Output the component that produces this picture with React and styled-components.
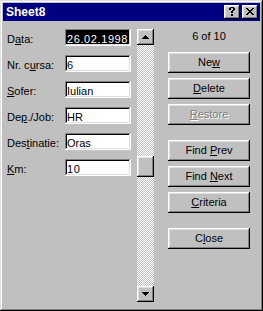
import React from "react";
import styled, { createGlobalStyle, css } from "styled-components";

const GlobalStyle = createGlobalStyle`
  html, body { margin: 0; padding: 0; background: #c0c0c0; }
  body { font-family: "Liberation Sans", Arial, sans-serif; font-size: 11px; }
  * { box-sizing: border-box; }
`;

const raised = css`
  background: #c0c0c0;
  box-shadow: inset -1px -1px #000, inset 1px 1px #fff, inset -2px -2px #808080, inset 2px 2px #dfdfdf;
`;

const Window = styled.div`
  width: 263px;
  height: 311px;
  padding: 3px;
  background: #c0c0c0;
  box-shadow: inset -1px -1px #000, inset 1px 1px #dfdfdf, inset -2px -2px #808080, inset 2px 2px #fff;
  display: flex;
  flex-direction: column;
  font-family: "Liberation Sans", Arial, sans-serif;
  font-size: 11px;
  color: #000;
`;

const TitleBar = styled.div`
  height: 18px;
  background: #000080;
  display: flex;
  align-items: center;
  padding: 0 2px 0 3px;
`;

const Title = styled.div`
  flex: 1;
  color: #fff;
  font-weight: bold;
  font-size: 12px;
  line-height: 18px;
`;

const CaptionButtons = styled.div`
  display: flex;
  gap: 2px;
`;

const CaptionButton = styled.div`
  ${raised};
  width: 16px;
  height: 14px;
  display: flex;
  align-items: center;
  justify-content: center;
  padding-bottom: 1px;
`;

const Body = styled.div`
  flex: 1;
  display: flex;
  align-items: flex-start;
  padding: 8px 0 0 4px;
`;

const Form = styled.div`
  width: 124px;
  display: flex;
  flex-direction: column;
  gap: 9px;
`;

const FieldRow = styled.div`
  display: flex;
  height: 17px;
`;

const Label = styled.div`
  width: 58px;
  padding-top: 2px;
  line-height: 16px;
  white-space: nowrap;
`;

const Field = styled.div`
  width: 66px;
  height: 17px;
  padding: 2px 2px 0 2px;
  line-height: 16px;
  overflow: hidden;
  white-space: nowrap;
  background: ${(p) => (p.$selected ? "#000" : "#fff")};
  color: ${(p) => (p.$selected ? "#fff" : "#000")};
  letter-spacing: ${(p) => (p.$numeric ? "0.6px" : "0")};
  box-shadow: inset -1px -1px #fff, inset 1px 1px #808080, inset -2px -2px #dfdfdf, inset 2px 2px #000;
`;

const Key = styled.u`
  text-decoration: underline;
`;

const ScrollBar = styled.div`
  margin-left: 6px;
  width: 17px;
  height: 273px;
  display: flex;
  flex-direction: column;
`;

const ScrollArrow = styled.div`
  ${raised};
  height: 16px;
  display: flex;
  align-items: center;
  justify-content: center;
`;

const Track = styled.div`
  flex: 1;
  position: relative;
  background: repeating-conic-gradient(#c0c0c0 0 25%, #fff 0 50%) 0 0 / 2px 2px;
`;

const Thumb = styled.div`
  ${raised};
  position: absolute;
  left: 0;
  right: 0;
  height: 21px;
`;

const Side = styled.div`
  margin-left: 14px;
  width: 82px;
  display: flex;
  flex-direction: column;
`;

const Counter = styled.div`
  height: 23px;
  line-height: 14px;
  text-align: center;
`;

const ButtonGroup = styled.div`
  display: flex;
  flex-direction: column;
  gap: 5px;
  margin-top: ${(p) => (p.$spaced ? "15px" : "0")};
`;

const Button = styled.button`
  ${raised};
  display: block;
  width: 82px;
  height: 21px;
  border: none;
  padding: 0;
  margin: 0;
  font: inherit;
  line-height: 21px;
  text-align: center;
  color: ${(p) => (p.disabled ? "#808080" : "#000")};
  text-shadow: ${(p) => (p.disabled ? "1px 1px 0 #fff" : "none")};
  outline: none;
`;

const Pixels = ({ w, h, d }) => (
  <svg width={w} height={h} viewBox={`0 0 ${w} ${h}`} shapeRendering="crispEdges">
    <path d={d} fill="#000" />
  </svg>
);

const HELP = "M2 0h4v1h-4z M1 1h2v2h-2z M5 1h2v2h-2z M4 3h2v1h-2z M3 4h2v2h-2z M3 7h2v2h-2z";
const CLOSE =
  "M0 0h2v1h-2z M6 0h2v1h-2z M1 1h2v1h-2z M5 1h2v1h-2z M2 2h4v1h-4z M3 3h2v1h-2z M2 4h4v1h-4z M1 5h2v1h-2z M5 5h2v1h-2z M0 6h2v1h-2z M6 6h2v1h-2z";
const UP = "M3 0h1v1h-1z M2 1h3v1h-3z M1 2h5v1h-5z M0 3h7v1h-7z";
const DOWN = "M0 0h7v1h-7z M1 1h5v1h-5z M2 2h3v1h-3z M3 3h1v1h-1z";

const Accel = ({ text, at }) => (
  <>
    {text.slice(0, at)}
    <Key>{text[at]}</Key>
    {text.slice(at + 1)}
  </>
);

const fields = [
  { label: "Data:", at: 1, value: "26.02.1998", numeric: true, selected: true },
  { label: "Nr. cursa:", at: 5, value: "6", numeric: true },
  { label: "Sofer:", at: 0, value: "Iulian" },
  { label: "Dep./Job:", at: 2, value: "HR" },
  { label: "Destinatie:", at: 3, value: "Oras" },
  { label: "Km:", at: 0, value: "10", numeric: true },
];

const groups = [
  [
    { text: "New", at: 2 },
    { text: "Delete", at: 0 },
    { text: "Restore", at: 0, disabled: true },
  ],
  [
    { text: "Find Prev", at: 5 },
    { text: "Find Next", at: 5 },
    { text: "Criteria", at: 0 },
  ],
  [{ text: "Close", at: 1 }],
];

const current = 6;
const total = 10;
const trackLength = 241;
const thumbLength = 21;

export default function App() {
  const thumbTop = Math.round(((current - 1) / total) * (trackLength - thumbLength)) + 1;
  return (
    <>
      <GlobalStyle />
      <Window>
        <TitleBar>
          <Title>Sheet8</Title>
          <CaptionButtons>
            <CaptionButton>
              <Pixels w={8} h={9} d={HELP} />
            </CaptionButton>
            <CaptionButton>
              <Pixels w={8} h={7} d={CLOSE} />
            </CaptionButton>
          </CaptionButtons>
        </TitleBar>
        <Body>
          <Form>
            {fields.map((f) => (
              <FieldRow key={f.label}>
                <Label>
                  <Accel text={f.label} at={f.at} />
                </Label>
                <Field $numeric={f.numeric} $selected={f.selected}>
                  {f.value}
                </Field>
              </FieldRow>
            ))}
          </Form>
          <ScrollBar>
            <ScrollArrow>
              <Pixels w={7} h={4} d={UP} />
            </ScrollArrow>
            <Track>
              <Thumb style={{ top: thumbTop }} />
            </Track>
            <ScrollArrow>
              <Pixels w={7} h={4} d={DOWN} />
            </ScrollArrow>
          </ScrollBar>
          <Side>
            <Counter>
              {current} of {total}
            </Counter>
            {groups.map((g, i) => (
              <ButtonGroup key={i} $spaced={i > 0}>
                {g.map((b) => (
                  <Button key={b.text} disabled={b.disabled}>
                    <Accel text={b.text} at={b.at} />
                  </Button>
                ))}
              </ButtonGroup>
            ))}
          </Side>
        </Body>
      </Window>
    </>
  );
}
